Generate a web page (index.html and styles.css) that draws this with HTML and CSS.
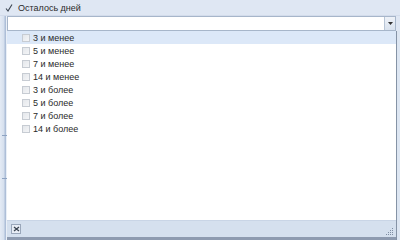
FILE: index.html
```html
<!DOCTYPE html>
<html>
<head>
<meta charset="utf-8">
<link rel="stylesheet" href="styles.css">
</head>
<body>
<div class="frame">
  <div class="header">
    <svg class="check" width="8" height="8" viewBox="0 0 8 8"><path d="M1 4.5L3 7L7 0.5" fill="none" stroke="#3b4552" stroke-width="1.1"/></svg>
    <span class="title">Осталось дней</span>
  </div>
  <div class="main">
    <div class="side"><span class="tick t1"></span><span class="tick t2"></span></div>
    <div class="content">
      <div class="combo-row">
        <div class="combo">
          <div class="combo-input"></div>
          <div class="combo-btn"><svg width="5" height="3" viewBox="0 0 5 3"><path d="M0 0H5L2.5 3Z" fill="#333"/></svg></div>
        </div>
      </div>
      <div class="popup">
        <ul class="list">
          <li class="item sel"><span class="box"></span>3 и менее</li>
          <li class="item"><span class="box"></span>5 и менее</li>
          <li class="item"><span class="box"></span>7 и менее</li>
          <li class="item"><span class="box"></span>14 и менее</li>
          <li class="item"><span class="box"></span>3 и более</li>
          <li class="item"><span class="box"></span>5 и более</li>
          <li class="item"><span class="box"></span>7 и более</li>
          <li class="item"><span class="box"></span>14 и более</li>
        </ul>
        <div class="footer">
          <div class="close-btn"><svg width="7" height="6" viewBox="0 0 7 6"><path d="M1 1L6 5M6 1L1 5" stroke="#3a4450" stroke-width="1.3"/></svg></div>
          <svg class="grip" width="8" height="8" viewBox="0 0 8 8">
            <rect x="6" y="0" width="1" height="1" fill="#7f8ea3"/>
            <rect x="4" y="2" width="1" height="1" fill="#7f8ea3"/>
            <rect x="6" y="2" width="1" height="1" fill="#7f8ea3"/>
            <rect x="2" y="4" width="1" height="1" fill="#7f8ea3"/>
            <rect x="4" y="4" width="1" height="1" fill="#7f8ea3"/>
            <rect x="6" y="4" width="1" height="1" fill="#7f8ea3"/>
            <rect x="0" y="6" width="1" height="1" fill="#7f8ea3"/>
            <rect x="2" y="6" width="1" height="1" fill="#7f8ea3"/>
            <rect x="4" y="6" width="1" height="1" fill="#7f8ea3"/>
            <rect x="6" y="6" width="1" height="1" fill="#7f8ea3"/>
          </svg>
        </div>
      </div>
    </div>
  </div>
</div>
</body>
</html>
```
FILE: styles.css
```css
* { box-sizing: border-box; }
html, body { margin: 0; padding: 0; }
body {
  width: 400px;
  height: 240px;
  overflow: hidden;
  font-family: "Liberation Sans", Arial, sans-serif;
  font-size: 9px;
  color: #1e1e1e;
  background: #dde6f2;
}
.frame {
  width: 400px;
  height: 240px;
  display: flex;
  flex-direction: column;
}
.header {
  height: 16px;
  flex: none;
  display: flex;
  align-items: center;
  background: #dfe7f3;
  padding-left: 5px;
  border-bottom: 1px solid #d3dceb;
}
.check {
  margin-right: 5px;
}
.title {
  font-size: 9px;
  color: #2a2a2a;
}
.main {
  flex: 1;
  display: flex;
  min-height: 0;
}
.side {
  width: 7px;
  flex: none;
  position: relative;
  background: linear-gradient(to right, #e4ebf5 0, #d6e0ee 4px, #aebfd8 5px, #aebfd8 6px, #e9eff7 6px);
}
.tick {
  position: absolute;
  left: 2px;
  width: 5px;
  height: 1px;
  background: #8ea3c2;
}
.t1 { top: 119px; }
.t2 { top: 162px; }
.content {
  flex: 1;
  display: flex;
  flex-direction: column;
  min-width: 0;
}
.combo-row {
  height: 15px;
  flex: none;
  padding-right: 4px;
  background: #dfe7f3;
}
.combo {
  height: 15px;
  display: flex;
  border: 1px solid #a7b6ca;
  background: #fff;
}
.combo-input { flex: 1; }
.combo-btn {
  width: 11px;
  display: flex;
  align-items: center;
  justify-content: center;
  background: linear-gradient(#eef2f8, #d9e2ee);
  border-left: 1px solid #b8c5d6;
}
.popup {
  flex: 1;
  display: flex;
  flex-direction: column;
  background: #fff;
  border-right: 1px solid #8593a6;
  margin-right: 3px;
  min-height: 0;
}
.list {
  list-style: none;
  margin: 0;
  padding: 0;
  flex: 1;
}
.item {
  height: 13px;
  display: flex;
  align-items: center;
  padding-left: 15px;
  font-size: 9px;
  color: #2a2a2a;
}
.item.sel {
  background: #dce8f8;
}
.box {
  width: 8px;
  height: 8px;
  border: 1px solid #c7ccd3;
  background: linear-gradient(135deg, #e4e7eb, #f4f5f7);
  margin-right: 3px;
}
.footer {
  height: 20px;
  flex: none;
  display: flex;
  align-items: center;
  justify-content: space-between;
  background: #d5e0ee;
  border-top: 1px solid #c9d5e6;
  border-bottom: 3px solid #8e9bb0;
  padding: 0 2px 0 4px;
}
.close-btn {
  width: 10px;
  height: 10px;
  display: flex;
  align-items: center;
  justify-content: center;
  border: 1px solid #9aa7ba;
  background: #e8edf5;
}
.grip { align-self: flex-end; margin-bottom: 1px; }
```
